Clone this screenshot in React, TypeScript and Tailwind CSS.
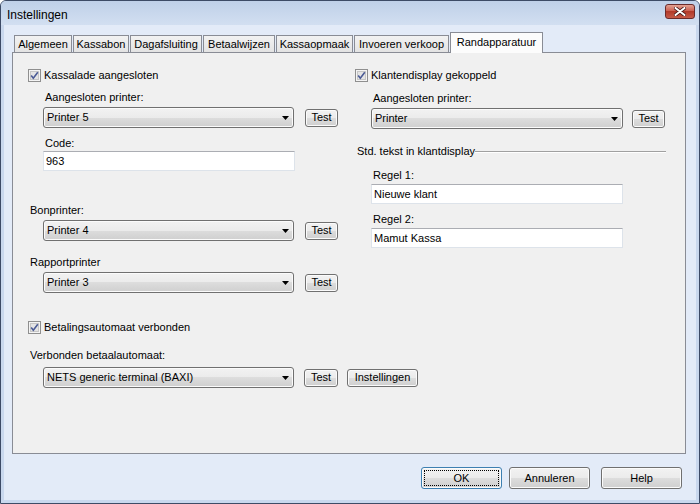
import type { ReactNode } from "react";

const btnBg =
  "bg-[linear-gradient(#f2f2f2,#ebebeb_50%,#dddddd_50%,#cfcfcf)] shadow-[inset_0_0_0_1px_#fbfbfb]";

function Check({ label }: { label: string }) {
  return (
    <div className="h-[14px] flex items-center gap-[3px]">
      <svg width="13" height="13" viewBox="0 0 13 13" className="shrink-0">
        <rect x="0.5" y="0.5" width="12" height="12" fill="#f4f4f4" stroke="#8f8f8f" />
        <rect x="2.5" y="2.5" width="8" height="8" fill="#e4e4e4" stroke="#c6c6c6" />
        <path d="M3.2 6.6 L5.3 9.2 L9.8 3.2" fill="none" stroke="#4a5a95" strokeWidth="1.6" />
      </svg>
      <span className="leading-[14px] whitespace-nowrap">{label}</span>
    </div>
  );
}

function Label({ children, className = "" }: { children: ReactNode; className?: string }) {
  return <div className={`h-[14px] leading-[14px] whitespace-nowrap ${className}`}>{children}</div>;
}

function Combo({ text, w }: { text: string; w: string }) {
  return (
    <div
      className={`${w} shrink-0 h-[21px] border border-[#707070] rounded-[3px] flex items-center pl-[3px] pr-[4px] ${btnBg}`}
    >
      <span className="flex-1 whitespace-nowrap">{text}</span>
      <svg width="7" height="4" viewBox="0 0 7 4">
        <path d="M0 0 H7 L3.5 4 Z" fill="#000" />
      </svg>
    </div>
  );
}

function Btn({ text, w }: { text: string; w: string }) {
  return (
    <div
      className={`${w} shrink-0 h-[18px] border border-[#707070] rounded-[3px] flex items-center justify-center ${btnBg}`}
    >
      {text}
    </div>
  );
}

function Field({ text, w }: { text: string; w: string }) {
  return (
    <div
      className={`${w} h-[20px] bg-white border border-[#dde3ea] border-t-[#abadb3] flex items-center pl-[2px]`}
    >
      {text}
    </div>
  );
}

function BigBtn({ text, def }: { text: string; def?: boolean }) {
  return (
    <div
      className={`w-[81px] h-[22px] rounded-[3px] border flex items-center justify-center ${btnBg} ${
        def ? "border-[#3c7fb1] p-[2px]" : "border-[#707070]"
      }`}
    >
      {def ? (
        <div className="w-full h-full border border-dotted border-black flex items-center justify-center">
          {text}
        </div>
      ) : (
        text
      )}
    </div>
  );
}

const tabs = [
  { label: "Algemeen", w: "w-[58px]" },
  { label: "Kassabon", w: "w-[56px]" },
  { label: "Dagafsluiting", w: "w-[72px]" },
  { label: "Betaalwijzen", w: "w-[72px]" },
  { label: "Kassaopmaak", w: "w-[77px]" },
  { label: "Invoeren verkoop", w: "w-[95px]" },
];

export default function App() {
  return (
    <div className="w-[700px] h-[504px] bg-[#c9d8ee] border border-[#3d4b66] rounded-t-[6px] flex flex-col overflow-hidden font-['Liberation_Sans',Arial,sans-serif] text-[11px] text-black">
      {/* title bar */}
      <div className="h-[24px] flex items-start justify-between pl-[6px] bg-[linear-gradient(#bfd0e8,#d2dff1)]">
        <span className="text-[12px] leading-[14px] mt-[7px]">Instellingen</span>
        <div className="mt-[3px] mr-[4px] w-[30px] h-[15px] rounded-[3px] border border-[#6b2b2b] bg-[linear-gradient(#e3a293,#c9594a_50%,#b23a2a_50%,#c55a48)] flex items-center justify-center">
          <svg width="12" height="9" viewBox="0 0 12 9">
            <path
              d="M1.5 1 L10.5 8 M10.5 1 L1.5 8"
              stroke="#4a1a1a"
              strokeWidth="3.6"
              strokeLinecap="round"
            />
            <path d="M1.5 1 L10.5 8 M10.5 1 L1.5 8" stroke="#fff" strokeWidth="2" strokeLinecap="round" />
          </svg>
        </div>
      </div>

      {/* client */}
      <div className="flex-1 mx-[3px] mb-[3px] bg-[#e3ebf8] flex flex-col pl-[8px] pr-[10px] pt-[8px]">
        {/* tabs */}
        <div className="h-[19px] flex items-end pl-[2px] gap-[1px]">
          {tabs.map((t) => (
            <div
              key={t.label}
              className={`${t.w} h-[17px] text-center border border-b-0 border-[#898c95] bg-[linear-gradient(#f2f2f2,#e3e3e3)] leading-[16px] whitespace-nowrap`}
            >
              {t.label}
            </div>
          ))}
          <div className="relative z-10 w-[93px] h-[21px] -mb-px text-center border border-b-0 border-[#898c95] bg-[#fcfcfc] leading-[18px]">
            Randapparatuur
          </div>
        </div>

        {/* panel */}
        <div className="h-[402px] border border-[#898c95] bg-[#f0f0f0] flex">
          {/* left */}
          <div className="w-[342px] shrink-0 pl-[15px] pt-[15px] flex flex-col">
            <Check label="Kassalade aangesloten" />
            <Label className="ml-[17px] mt-[8px]">Aangesloten printer:</Label>
            <div className="ml-[15px] mt-[3px] flex items-center gap-[11px]">
              <Combo text="Printer 5" w="w-[251px]" />
              <Btn text="Test" w="w-[33px]" />
            </div>
            <Label className="ml-[17px] mt-[8px]">Code:</Label>
            <div className="ml-[15px] mt-[1px]">
              <Field text="963" w="w-[252px]" />
            </div>
            <Label className="ml-[2px] mt-[32px]">Bonprinter:</Label>
            <div className="ml-[15px] mt-[3px] flex items-center gap-[11px]">
              <Combo text="Printer 4" w="w-[251px]" />
              <Btn text="Test" w="w-[33px]" />
            </div>
            <Label className="ml-[2px] mt-[14px]">Rapportprinter</Label>
            <div className="ml-[15px] mt-[3px] flex items-center gap-[11px]">
              <Combo text="Printer 3" w="w-[251px]" />
              <Btn text="Test" w="w-[33px]" />
            </div>
            <div className="mt-[27px]">
              <Check label="Betalingsautomaat verbonden" />
            </div>
            <Label className="ml-[2px] mt-[14px]">Verbonden betaalautomaat:</Label>
            <div className="ml-[15px] mt-[5px] flex items-center">
              <Combo text="NETS generic terminal (BAXI)" w="w-[251px]" />
              <div className="ml-[10px] shrink-0">
                <Btn text="Test" w="w-[34px]" />
              </div>
              <div className="ml-[9px] shrink-0">
                <Btn text="Instellingen" w="w-[71px]" />
              </div>
            </div>
          </div>

          {/* right */}
          <div className="flex-1 pt-[15px] flex flex-col">
            <Check label="Klantendisplay gekoppeld" />
            <Label className="ml-[18px] mt-[9px]">Aangesloten printer:</Label>
            <div className="ml-[16px] mt-[3px] flex items-center gap-[9px]">
              <Combo text="Printer" w="w-[252px]" />
              <Btn text="Test" w="w-[33px]" />
            </div>
            <div className="ml-[2px] mt-[15px] w-[309px] h-[14px] flex items-center">
              <span className="leading-[14px]">Std. tekst in klantdisplay</span>
              <div className="flex-1 mt-[2px] h-[2px] border-t border-[#a0a0a0] border-b border-b-white" />
            </div>
            <Label className="ml-[18px] mt-[10px]">Regel 1:</Label>
            <div className="ml-[16px] mt-[2px]">
              <Field text="Nieuwe klant" w="w-[252px]" />
            </div>
            <Label className="ml-[18px] mt-[8px]">Regel 2:</Label>
            <div className="ml-[16px] mt-[2px]">
              <Field text="Mamut Kassa" w="w-[252px]" />
            </div>
          </div>
        </div>

        {/* dialog buttons */}
        <div className="mt-[13px] pr-[4px] flex justify-end">
          <BigBtn text="OK" def />
          <div className="ml-[7px]">
            <BigBtn text="Annuleren" />
          </div>
          <div className="ml-[11px]">
            <BigBtn text="Help" />
          </div>
        </div>
      </div>
    </div>
  );
}
